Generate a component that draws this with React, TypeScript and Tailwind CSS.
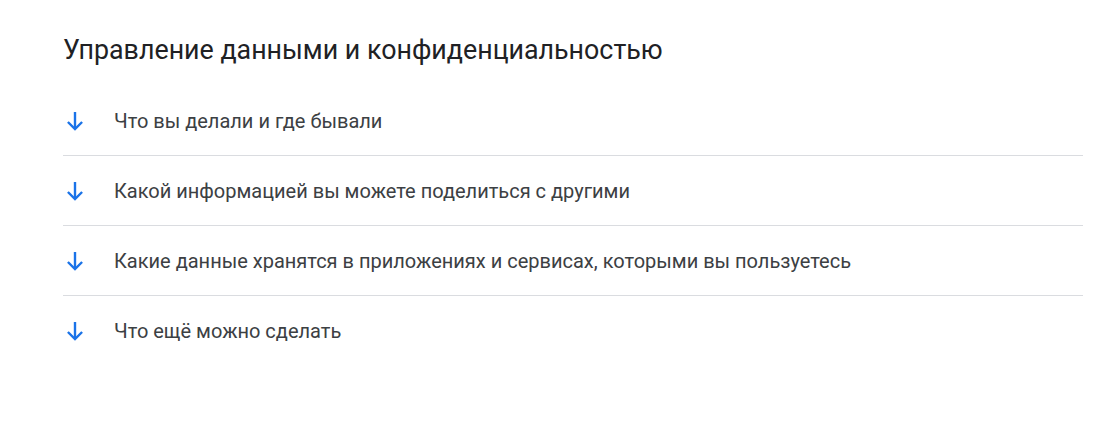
const items = [
  "Что вы делали и где бывали",
  "Какой информацией вы можете поделиться с другими",
  "Какие данные хранятся в приложениях и сервисах, которыми вы пользуетесь",
  "Что ещё можно сделать",
];

function ArrowDown() {
  return (
    <svg
      viewBox="0 0 16 20"
      className="h-[20px] w-[16px] shrink-0"
      fill="none"
      stroke="#1a73e8"
      strokeWidth={2.4}
    >
      <path d="M8 1v17" />
      <path d="M0.9 11L8 18.1l7.1-7.1" />
    </svg>
  );
}

export default function App() {
  return (
    <div className="h-[440px] w-[1099px] bg-white pl-[63px] pr-4 font-['Roboto',sans-serif]">
      <h1 className="pt-[32px] text-[26.8px] leading-[36px] text-[#202124]">
        Управление данными и конфиденциальностью
      </h1>
      <ul className="mt-[18px]">
        {items.map((text, i) => (
          <li
            key={text}
            className={
              i < items.length - 1
                ? "flex h-[70px] items-center gap-[31px] border-b border-[#dadce0] pl-[4px]"
                : "flex h-[70px] items-center gap-[31px] pl-[4px]"
            }
          >
            <ArrowDown />
            <span className="text-[20px] text-[#3c4043]">{text}</span>
          </li>
        ))}
      </ul>
    </div>
  );
}
